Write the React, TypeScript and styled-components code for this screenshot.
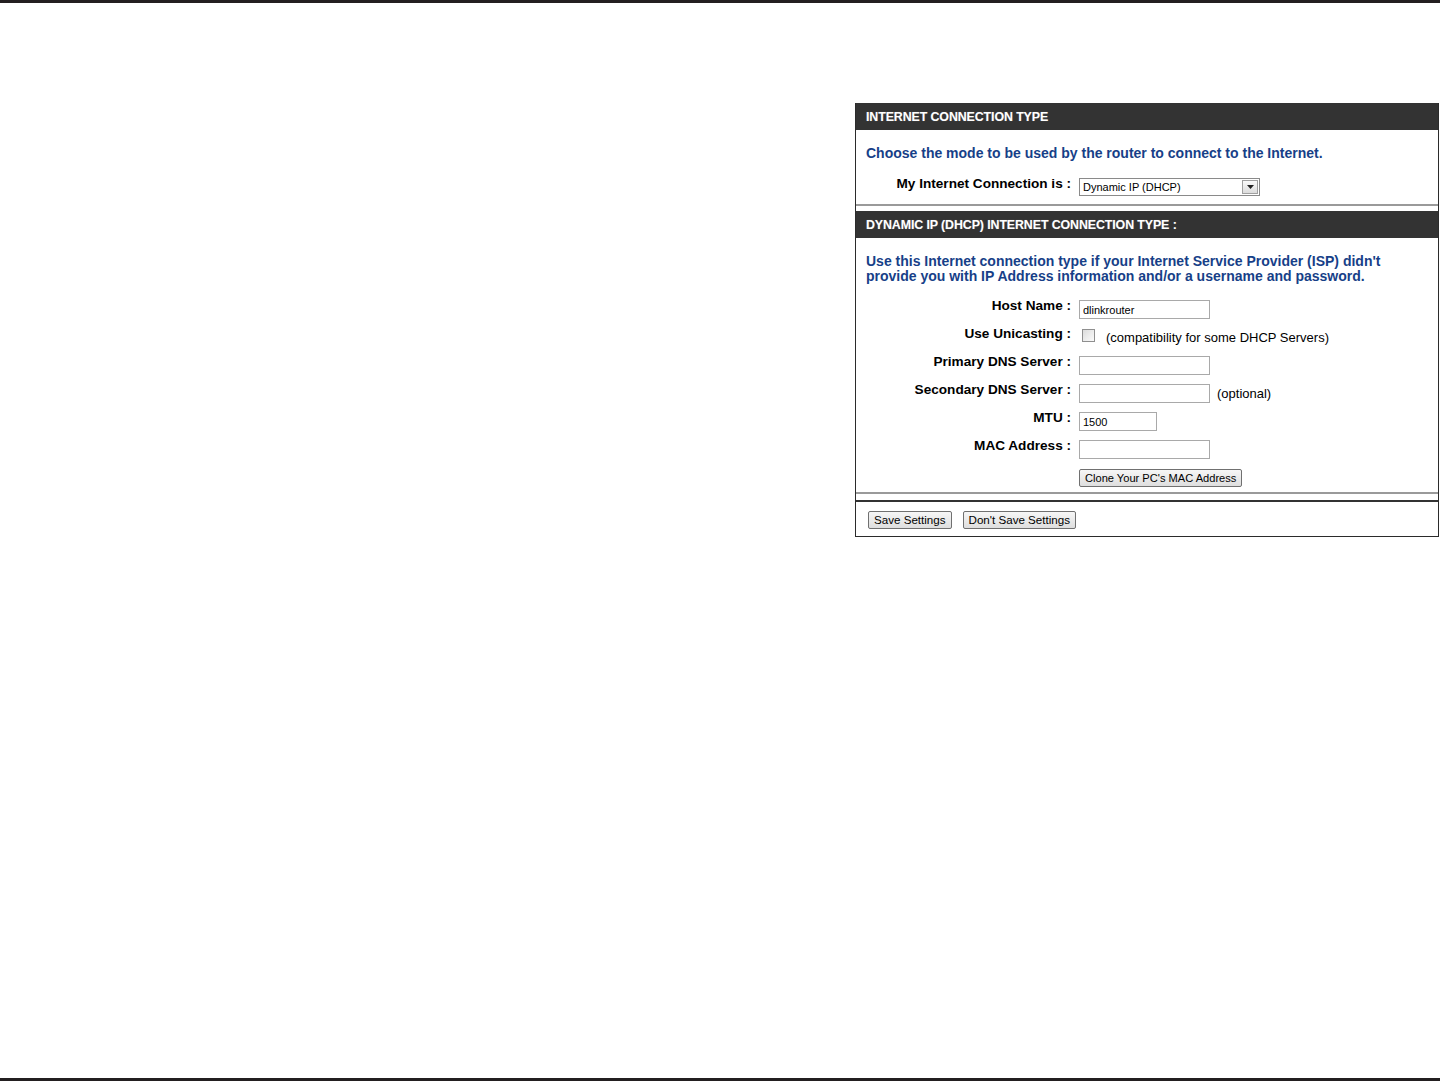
import React, { useState } from 'react';
import styled, { createGlobalStyle } from 'styled-components';

const GlobalStyle = createGlobalStyle`
  html, body {
    margin: 0;
    padding: 0;
    background: #fff;
  }
  body {
    font-family: "Liberation Sans", Arial, sans-serif;
  }
`

const Page = styled.div`
  display: flex;
  flex-direction: column;
  height: 1081px;
  overflow: hidden;
`
const Rule = styled.div`
  height: 3px;
  background-color: #231f20;
  flex-shrink: 0;
`
const Main = styled.div`
  flex: 1;
  padding: 100px 1px 0 855px;
`
const Panel = styled.div`
  width: 582px;
  border: 1px solid #2b2b2b;
  border-top: none;
  background: #fff;
`
const SectionHeader = styled.div<{ gapTop?: boolean }>`
  height: 27px;
  display: flex;
  align-items: center;
  padding-left: 10px;
  margin-top: ${(props) => props.gapTop ? '5px' : '0'};
  background-color: #333333;
  color: #fff;
  font-weight: bold;
  font-size: 12.4px;
  letter-spacing: -0.1px;
  text-shadow: 0 0 1px rgba(255, 255, 255, 0.3);
`
const SectionBody = styled.div<{ padTop: number, padBottom: number }>`
  padding: ${(props) => props.padTop}px 10px ${(props) => props.padBottom}px 10px;
  border-bottom: 2px solid #9a9a9a;
`
const Intro = styled.p`
  margin: 0;
  color: #173f88;
  font-weight: bold;
  font-size: 14px;
  line-height: 15px;
`
const FormGrid = styled.div<{ top: number }>`
  display: grid;
  grid-template-columns: 205px auto;
  column-gap: 8px;
  row-gap: 9px;
  margin-top: ${(props) => props.top}px;
`
const Label = styled.div`
  text-align: right;
  font-weight: bold;
  font-size: 13.6px;
  color: #000;
  line-height: 15px;
  margin-top: -2px;
  white-space: nowrap;
`
const Control = styled.div`
  display: flex;
  align-items: center;
  gap: 7px;
  min-height: 19px;
  font-size: 13px;
  color: #000;
`
const TextBox = styled.input<{ w: number }>`
  box-sizing: border-box;
  width: ${(props) => props.w}px;
  height: 19px;
  margin: 0;
  padding: 0 3px;
  border: 1px solid #a9a9a9;
  font-family: "Liberation Sans", Arial, sans-serif;
  font-size: 11px;
  color: #000;
  outline: none;
`
const SelectBox = styled.div`
  box-sizing: border-box;
  width: 181px;
  height: 18px;
  border: 1px solid #8a8a8a;
  display: flex;
  align-items: center;
  justify-content: space-between;
  padding: 0 1px 0 3px;
  font-size: 11px;
  color: #000;
`
const SelectArrow = styled.div`
  box-sizing: border-box;
  width: 16px;
  height: 14px;
  border: 1px solid #a0a0a0;
  background: linear-gradient(#fafafa, #dcdcdc);
  display: flex;
  align-items: center;
  justify-content: center;
`
const CheckBox = styled.span`
  box-sizing: border-box;
  width: 13px;
  height: 13px;
  margin: -4px 4px 0 3px;
  border: 1px solid #8f8f8f;
  background: linear-gradient(135deg, #dcdcdc, #fbfbfb);
`
const Button = styled.button<{ small?: boolean }>`
  height: 18px;
  padding: 0 5px;
  border: 1px solid #707070;
  border-radius: 2px;
  background: linear-gradient(#f6f6f6, #dedede);
  font-family: "Liberation Sans", Arial, sans-serif;
  font-size: ${(props) => props.small ? '11.1px' : '11.6px'};
  color: #000;
  line-height: 14px;
  cursor: pointer;
`
const Footer = styled.div`
  margin-top: 6px;
  border-top: 2px solid #333;
  display: flex;
  gap: 11px;
  padding: 9px 12px 7px;
`

function App() {
  const [hostName, setHostName] = useState('dlinkrouter')
  const [mtu, setMtu] = useState('1500')

  return (
    <Page>
      <GlobalStyle />
      <Rule />
      <Main>
        <Panel>
          <SectionHeader>INTERNET CONNECTION TYPE</SectionHeader>
          <SectionBody padTop={16} padBottom={8}>
            <Intro>Choose the mode to be used by the router to connect to the Internet.</Intro>
            <FormGrid top={16}>
              <Label style={{ marginTop: '-1px' }}>My Internet Connection is :</Label>
              <Control>
                <SelectBox>
                  <span>Dynamic IP (DHCP)</span>
                  <SelectArrow>
                    <svg width="7" height="4" viewBox="0 0 7 4">
                      <path d="M0 0h7L3.5 4z" fill="#222" />
                    </svg>
                  </SelectArrow>
                </SelectBox>
              </Control>
            </FormGrid>
          </SectionBody>
          <SectionHeader gapTop>DYNAMIC IP (DHCP) INTERNET CONNECTION TYPE :</SectionHeader>
          <SectionBody padTop={16} padBottom={5}>
            <Intro>
              Use this Internet connection type if your Internet Service Provider (ISP) didn't<br />
              provide you with IP Address information and/or a username and password.
            </Intro>
            <FormGrid top={16}>
              <Label>Host Name :</Label>
              <Control>
                <TextBox w={131} value={hostName} onChange={(e) => setHostName(e.target.value)} />
              </Control>
              <Label>Use Unicasting :</Label>
              <Control>
                <CheckBox />
                <span>(compatibility for some DHCP Servers)</span>
              </Control>
              <Label>Primary DNS Server :</Label>
              <Control>
                <TextBox w={131} defaultValue="" />
              </Control>
              <Label>Secondary DNS Server :</Label>
              <Control>
                <TextBox w={131} defaultValue="" />
                <span>(optional)</span>
              </Control>
              <Label>MTU :</Label>
              <Control>
                <TextBox w={78} value={mtu} onChange={(e) => setMtu(e.target.value)} />
              </Control>
              <Label>MAC Address :</Label>
              <Control>
                <TextBox w={131} defaultValue="" />
              </Control>
              <div />
              <Control>
                <Button small>Clone Your PC's MAC Address</Button>
              </Control>
            </FormGrid>
          </SectionBody>
          <Footer>
            <Button>Save Settings</Button>
            <Button>Don't Save Settings</Button>
          </Footer>
        </Panel>
      </Main>
      <Rule />
    </Page>
  );
}

export default App;
